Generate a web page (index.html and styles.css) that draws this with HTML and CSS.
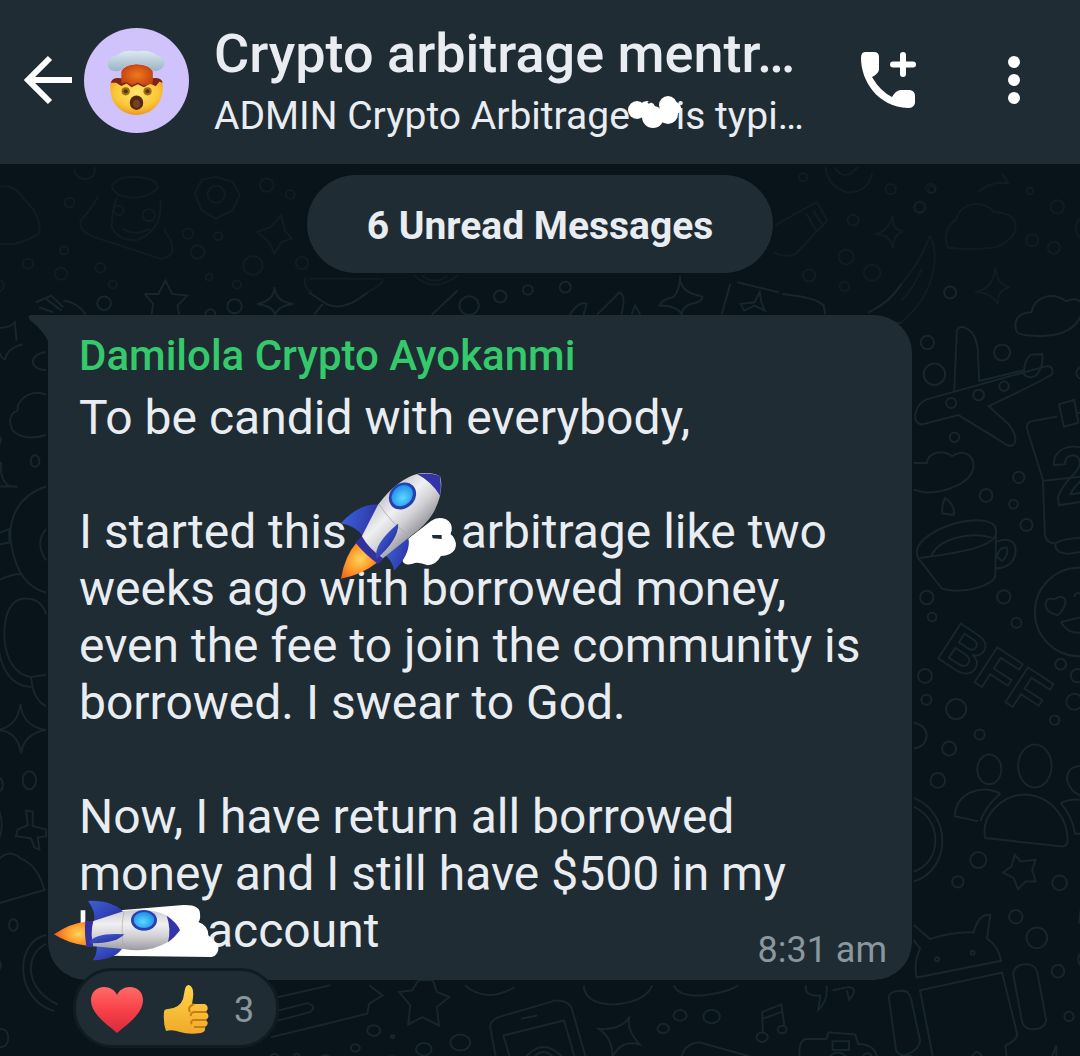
FILE: index.html
```html
<!DOCTYPE html>
<html lang="en">
<head>
<meta charset="utf-8">
<meta name="viewport" content="width=device-width, initial-scale=1">
<title>Crypto arbitrage group chat</title>
<link rel="stylesheet" href="styles.css">
</head>
<body>
<svg class="defs" aria-hidden="true">
  <defs>
    <linearGradient id="hull" x1="0" y1="0" x2="0" y2="1">
      <stop offset="0" stop-color="#c9cad2"/><stop offset=".35" stop-color="#f0f0f2"/><stop offset=".65" stop-color="#d2d1d3"/><stop offset="1" stop-color="#9c9ba3"/>
    </linearGradient>
    <linearGradient id="fin" x1="0" y1="0" x2="1" y2="1">
      <stop offset="0" stop-color="#3a62d8"/><stop offset="1" stop-color="#2c2799"/>
    </linearGradient>
    <radialGradient id="flame" cx=".75" cy=".5" r=".75">
      <stop offset="0" stop-color="#ffd65a"/><stop offset=".5" stop-color="#ff9a2c"/><stop offset="1" stop-color="#ef5a1a"/>
    </radialGradient>
    <radialGradient id="glass" cx=".45" cy=".6" r=".6">
      <stop offset="0" stop-color="#5fd8ff"/><stop offset="1" stop-color="#1d8fea"/>
    </radialGradient>
    <radialGradient id="skin" cx=".5" cy=".35" r=".7">
      <stop offset="0" stop-color="#ffe66b"/><stop offset=".6" stop-color="#fbc637"/><stop offset="1" stop-color="#e98e1c"/>
    </radialGradient>
    <linearGradient id="smoke" x1="0" y1="0" x2="0" y2="1">
      <stop offset="0" stop-color="#dde9f0"/><stop offset="1" stop-color="#98b3c6"/>
    </linearGradient>
    <radialGradient id="blast" cx=".5" cy=".5" r=".6">
      <stop offset="0" stop-color="#ee7a1c"/><stop offset="1" stop-color="#c13c10"/>
    </radialGradient>
    <linearGradient id="heart" x1="0" y1="0" x2="0" y2="1">
      <stop offset="0" stop-color="#ff6a66"/><stop offset=".5" stop-color="#f8414a"/><stop offset="1" stop-color="#d82a3c"/>
    </linearGradient>
    <linearGradient id="thumb" x1="0" y1="0" x2="0" y2="1">
      <stop offset="0" stop-color="#ffd54a"/><stop offset="1" stop-color="#f0a92a"/>
    </linearGradient>
    <g id="rocket">
      <path fill="url(#fin)" d="M144 62Q215 58 250 94L245 128H162Q168 92 144 62Z"/>
      <path fill="url(#fin)" d="M158 240Q172 222 170 198L252 194Q235 238 158 240Z"/>
      <path fill="url(#flame)" d="M42 162Q90 128 140 124V196Q85 190 42 162Z"/>
      <path fill="#33309f" d="M136 122H164V200H140Q132 160 136 122Z"/>
      <path fill="url(#hull)" d="M160 122L250 93Q335 80 385 108Q412 128 420 150Q400 185 340 204Q300 214 250 206L160 198Q150 160 160 122Z"/>
      <path fill="none" stroke="#aaa9b0" stroke-width="2" d="M252 94Q240 150 252 206"/>
      <path fill="#3434a6" d="M380 106Q412 128 420 150Q405 170 384 186Q394 145 380 106Z"/>
      <ellipse cx="312" cy="120" rx="39" ry="31" fill="#2a3fae"/>
      <ellipse cx="312" cy="119" rx="31" ry="24" fill="url(#glass)"/>
      <path fill="url(#fin)" d="M146 188Q165 156 253 162Q225 192 146 188Z"/>
    </g>
  </defs>
</svg>

<header class="topbar">
  <button class="icon-button" aria-label="Back">
    <svg width="48" height="50" viewBox="0 0 48 50"><path d="M26 3L4 25L26 47M4 25H48" fill="none" stroke="#fff" stroke-width="6"/></svg>
  </button>
  <svg class="avatar" viewBox="0 0 360 360" role="img" aria-label="Group photo">
    <circle cx="180" cy="180" r="180" fill="#d0c2fa"/>
    <path fill="url(#skin)" d="M90 190Q96 176 110 188L128 198L146 188L163 202L184 192L206 202L226 188L246 200L258 182Q272 178 270 205C270 262 228 298 180 298S90 262 90 205Z"/>
    <path fill="#7b2417" d="M92 188Q96 168 125 172H235Q266 168 270 188L258 184L246 200L226 190L206 203L184 193L163 203L146 190L128 199L110 188Z"/>
    <path fill="url(#blast)" d="M128 190V150Q136 126 180 124Q228 126 236 150V190L206 198L184 188L163 197L146 186Z"/>
    <path fill="url(#smoke)" d="M90 142C72 120 90 96 112 94C132 76 162 76 180 80C206 74 240 80 250 94C276 98 284 124 266 140Q250 152 232 144C222 124 204 128 182 122C160 128 142 124 132 142Q110 154 90 142Z"/>
    <circle cx="143" cy="217" r="14" fill="#9b6b16"/><circle cx="143" cy="217" r="7" fill="#4b3714"/>
    <circle cx="218" cy="217" r="14" fill="#9b6b16"/><circle cx="218" cy="217" r="7" fill="#4b3714"/>
    <ellipse cx="180" cy="256" rx="23" ry="25" fill="#53290f"/><ellipse cx="180" cy="260" rx="12" ry="14" fill="#7c3e20"/>
  </svg>
  <div class="titles">
    <h1 class="title">Crypto arbitrage mentr…</h1>
    <p class="subtitle">ADMIN Crypto Arbitrage<span class="smudge smudge-small"><svg viewBox="0 0 55 34" width="55" height="34" aria-hidden="true"><g fill="#fff"><circle cx="10" cy="15" r="9"/><circle cx="20" cy="15" r="9"/><circle cx="26" cy="22" r="11"/><circle cx="41" cy="10" r="9"/><circle cx="41" cy="19" r="10"/><circle cx="48" cy="13" r="6"/></g><path d="M21 8Q26 4 31 9" fill="none" stroke="#1f2c33" stroke-width="2"/></svg></span>is typi…</p>
  </div>
  <button class="icon-button call" aria-label="Add call">
    <svg width="56" height="58" viewBox="0 0 56 58"><path fill="#fff" d="M5 1H14Q19 1 19 6V19Q18 23 12 26Q20 40 32 46Q36 39 41 39H50Q55 40 55 45V52Q54 57 48 57C18 56 1 30 1 7Q1 1 5 1Z"/><path d="M43 4V23M33 13.500H53" stroke="#fff" stroke-width="6" stroke-linecap="round"/></svg>
  </button>
  <button class="icon-button" aria-label="More options">
    <svg width="14" height="50" viewBox="0 0 14 50" fill="#fff"><circle cx="7" cy="7" r="6"/><circle cx="7" cy="25" r="6"/><circle cx="7" cy="43" r="6"/></svg>
  </button>
</header>

<main class="chat">
  <svg class="wallpaper" viewBox="0 164 1080 892" preserveAspectRatio="xMidYMin slice" aria-hidden="true">
    <g class="faint" transform="translate(0 160) scale(.3444 .3333)">
      <path d="M0 80Q50 70 75 115Q130 170 120 220Q60 260 0 250M330 80Q340 50 400 50Q465 55 462 85Q430 115 390 112Q340 110 330 80ZM345 112Q330 150 330 200Q345 240 400 240Q480 210 470 120M290 110Q270 150 240 180Q235 215 280 230L470 295Q520 290 500 240L480 205M360 205Q400 230 440 205M570 100L590 60L630 50L680 65L700 105L680 150L630 175L590 150ZM750 215L790 200L820 165L830 210L850 235L820 245L800 280L785 245ZM220 30Q235 65 265 55Q285 45 280 20"/>
      <circle cx="632" cy="103" r="25"/><circle cx="350" cy="150" r="14"/><circle cx="437" cy="165" r="18"/><circle cx="208" cy="127" r="14"/><circle cx="778" cy="75" r="20"/><circle cx="846" cy="103" r="13"/><circle cx="550" cy="220" r="15"/><circle cx="638" cy="228" r="12"/><circle cx="578" cy="275" r="20"/><circle cx="738" cy="315" r="28"/><circle cx="88" cy="310" r="15"/><circle cx="192" cy="270" r="12"/><circle cx="183" cy="340" r="18"/><circle cx="297" cy="322" r="14"/><circle cx="333" cy="372" r="12"/><circle cx="612" cy="350" r="10"/><circle cx="692" cy="372" r="12"/><circle cx="0" cy="375" r="18"/><circle cx="880" cy="308" r="18"/>
      <path d="M890 350Q880 380 910 395M1115 355Q1110 375 1070 395M900 355H1110M1205 345Q1260 400 1330 345M1225 345Q1265 375 1300 345"/>
    </g>
    <g transform="translate(0 160) scale(.3444 .3333)">
      <path d="M110 425L155 405L190 440M120 440L160 455M140 415L185 450M190 420Q230 425 255 462M425 400L465 400L485 360L505 400L548 405L520 435L525 462M425 400L450 430L445 462M800 380Q805 425 855 430Q810 435 803 462Q795 435 750 430Q800 420 800 380ZM900 395L950 430Q1000 455 1070 395M940 430L915 462M1330 390L1255 462M0 500Q30 505 50 485L55 540"/>
      <circle cx="308" cy="428" r="20"/><circle cx="685" cy="437" r="21"/><circle cx="615" cy="460" r="14"/><circle cx="1363" cy="435" r="28"/><circle cx="1453" cy="408" r="18"/><circle cx="1533" cy="388" r="14"/>
    </g>
    <g class="faint" transform="translate(540 160) scale(.3444 .3333)">
      <path d="M825 20Q830 80 890 97Q950 95 960 40M850 20Q880 70 920 20M680 195L800 125L830 180L740 280Q710 295 675 275M1020 165Q1015 210 1050 212Q1020 225 1020 262Q1010 220 970 222Q1010 210 1020 165ZM790 150L820 200M770 160L800 215"/>
      <circle cx="1014" cy="87" r="15"/><circle cx="905" cy="180" r="16"/><circle cx="1100" cy="140" r="16"/><circle cx="885" cy="290" r="22"/><circle cx="960" cy="337" r="24"/><circle cx="778" cy="345" r="18"/><circle cx="880" cy="378" r="14"/><circle cx="760" cy="52" r="12"/><circle cx="1130" cy="85" r="14"/>
    </g>
    <g transform="translate(540 160) scale(.3444 .3333)">
      <path d="M85 465Q110 420 135 430L125 465M165 462L230 395Q250 405 235 462M265 462L275 435L290 462M405 345Q400 395 470 408Q470 425 435 430Q410 440 410 462Q395 435 345 435Q355 415 385 410Q405 390 405 345ZM525 462L550 370M570 365L690 395M700 400Q800 410 820 435L825 462M580 430L620 425L635 395L640 425L650 450L620 435L590 450Z"/>
      <circle cx="73" cy="380" r="16"/>
    </g>
    <g class="faint" transform="translate(900 160) scale(.3333)">
      <path d="M140 262C120 230 140 190 162 180C180 120 250 120 275 155C310 155 345 170 340 200C340 230 300 260 270 262Q200 270 140 262ZM230 95Q270 60 318 70L300 40M280 320Q285 375 325 380Q285 385 288 432Q270 395 220 395Q275 385 280 320ZM540 170Q500 200 540 240"/>
      <circle cx="52" cy="142" r="16"/><circle cx="465" cy="140" r="20"/><circle cx="390" cy="240" r="18"/><circle cx="455" cy="262" r="18"/><circle cx="90" cy="88" r="10"/><circle cx="383" cy="92" r="10"/>
      <path d="M85 225C60 290 40 320 0 370M85 225C115 290 100 400 0 485M60 325C40 370 20 400 0 420"/>
    </g>
    <g transform="translate(900 160) scale(.3333)">
      <path d="M0 370Q-40 430 -100 455M0 485L-20 490"/>
      <path d="M345 515C330 480 350 455 388 455C395 410 450 390 492 422C520 408 545 420 540 450C530 500 480 530 400 525Q355 525 345 515Z"/>
      <path d="M157 690L165 510Q175 485 210 515Q228 540 228 580L232 660L365 628M425 618Q455 610 450 640Q380 680 260 735L320 790Q350 830 335 850Q320 860 305 845L170 762L60 790Q35 785 42 755Q50 725 75 715ZM365 640Q365 600 385 582L420 580Q425 620 400 645Q380 655 365 640Z"/>
      <path d="M36 905H75C80 870 125 865 150 885C190 860 215 885 215 915C210 965 130 995 70 993L36 985M130 1010Q160 1030 156 1060L122 1056Q118 1030 130 1010Z"/>
      <path d="M50 1190C30 1150 80 1110 160 1085C240 1065 285 1080 282 1110C285 1160 150 1175 50 1190L120 1280C180 1300 280 1270 280 1240L282 1100M285 1140C320 1125 345 1140 340 1175C335 1205 310 1220 280 1220M88 1185C110 1130 200 1110 270 1128M285 1185Q290 1155 315 1158Q320 1180 300 1198Z"/>
      <path d="M465 766L390 780Q370 785 375 805L422 955L428 1120Q435 1145 455 1145M540 1128Q480 1130 460 1145Q455 1175 500 1176L540 1170M425 958L540 945M525 755H540M470 730L515 716L528 785L485 797Z"/>
      <circle cx="77" cy="545" r="20"/><circle cx="98" cy="640" r="32"/><circle cx="300" cy="575" r="24"/><circle cx="230" cy="702" r="16"/><circle cx="306" cy="676" r="14"/><circle cx="148" cy="726" r="15"/><circle cx="158" cy="828" r="14"/><circle cx="145" cy="396" r="18"/><circle cx="350" cy="948" r="17"/><circle cx="252" cy="1002" r="19"/><circle cx="334" cy="1028" r="13"/><circle cx="373" cy="1090" r="18"/><circle cx="75" cy="1307" r="20"/><circle cx="305" cy="1305" r="20"/><circle cx="540" cy="636" r="18"/>
      <circle cx="530" cy="1350" r="132"/>
      <path d="M430 1330Q430 1305 455 1312Q485 1295 490 1320Q485 1345 465 1360Q430 1350 430 1330ZM515 1305Q520 1285 540 1300M475 1380Q500 1420 540 1410M475 1380L540 1365"/>
    </g>
    <text class="doodle-text" transform="translate(933 654) rotate(33)" font-size="60">BFF</text>
    <text class="doodle-text" transform="translate(1054 504) rotate(-8)" font-size="80">2</text>
    <g transform="translate(900 600) scale(.3333)">
      <circle cx="91" cy="45" r="13"/><circle cx="343" cy="62" r="15"/><circle cx="70" cy="221" r="21"/><circle cx="74" cy="292" r="15"/><circle cx="163" cy="320" r="30"/><circle cx="142" cy="438" r="21"/><circle cx="108" cy="533" r="22"/><circle cx="233" cy="396" r="15"/><circle cx="457" cy="353" r="14"/><circle cx="475" cy="186" r="16"/><circle cx="525" cy="220" r="20"/><circle cx="516" cy="298" r="24"/><circle cx="229" cy="771" r="24"/><circle cx="168" cy="836" r="17"/><circle cx="472" cy="839" r="22"/><circle cx="341" cy="940" r="20"/><circle cx="404" cy="1003" r="31"/><circle cx="467" cy="1103" r="19"/><circle cx="500" cy="1238" r="14"/><circle cx="106" cy="1067" r="6"/><circle cx="212" cy="1048" r="6"/>
      <ellipse cx="262" cy="500" rx="36" ry="44"/><ellipse cx="398" cy="490" rx="50" ry="64"/>
      <path d="M250 705C235 640 300 575 370 575C450 580 500 650 495 720Q490 732 475 730ZM295 572C240 545 165 565 158 640L228 655M295 572Q250 610 235 655M540 490Q490 490 495 535Q505 570 540 580M475 600Q510 585 540 592M475 600Q510 640 518 692H540M338 755L355 775L400 770L390 800L400 835L370 835L348 858L335 825L303 808L328 790Z"/>
      <path d="M36 585C150 630 150 800 36 835M36 612C125 650 120 780 36 805M36 360Q75 370 75 400Q70 435 36 437M36 965L85 1007Q150 985 215 987Q230 930 265 935L255 1005Q290 1030 297 1072L45 1122Q35 1080 55 1035L36 1010M95 1368L55 1160L300 1107L345 1290Q345 1310 310 1325L315 1368M333 1110Q340 1080 375 1082Q400 1085 405 1105L432 1250Q425 1280 385 1276Q365 1272 360 1255ZM0 1160Q20 1160 28 1185L55 1310Q50 1345 0 1355M205 1368Q225 1320 245 1368M445 1368L462 1325V1368M540 880L530 960M540 1040Q515 1070 540 1090"/>
    </g>
    <g transform="translate(270 960) scale(.4082 .3333)">
      <path d="M5 105L150 65M8 145L95 118Q120 130 100 145L8 175M5 220L240 150L245 120L278 95L245 65M318 85L350 80L365 50L400 50L410 85L440 100L410 130L415 185L375 160L340 182L345 125ZM478 65Q530 120 600 70M768 65Q770 120 840 122Q920 115 935 65M988 65Q1000 100 1060 95Q1120 85 1145 65"/>
      <path d="M555 288L540 190Q540 170 560 160L700 110Q735 110 740 140L775 288M590 288L572 215L720 170L748 288M615 165L655 155M620 288Q670 210 722 288M640 288Q670 240 700 288M880 158Q870 195 905 242Q860 225 838 280Q840 225 805 195Q860 200 880 158ZM1005 288Q1010 240 1050 235L1180 280M1205 205L1203 145L1250 122L1258 190M1205 165L1250 145M1310 65Q1305 100 1345 95L1340 138Q1365 110 1360 65M1375 80L1415 70Q1440 75 1415 108L1410 80M1295 288Q1290 230 1310 225L1360 225L1365 205L1430 212L1438 240Q1480 240 1485 288M1375 232H1415V258H1375ZM1560 85Q1515 75 1512 100L1530 260Q1540 280 1568 275"/>
      <circle cx="256" cy="200" r="16"/><circle cx="302" cy="218" r="4"/><circle cx="211" cy="252" r="11"/><circle cx="378" cy="256" r="19"/><circle cx="467" cy="236" r="24"/><circle cx="962" cy="194" r="14"/><circle cx="1003" cy="155" r="16"/><circle cx="1080" cy="158" r="20"/><circle cx="1203" cy="220" r="14"/><circle cx="1252" cy="197" r="11"/><circle cx="1388" cy="288" r="22"/><circle cx="1460" cy="278" r="10"/><circle cx="300" cy="295" r="18"/><circle cx="68" cy="275" r="6"/><circle cx="14" cy="280" r="10"/><circle cx="138" cy="290" r="16"/>
    </g>
    <g transform="translate(0 340) scale(.3333 .4464)">
      <path d="M0 15Q10 40 22 42Q30 15 75 8M145 25Q105 30 105 48Q110 65 145 65M145 120C110 110 75 120 60 145L60 155C30 165 35 185 45 200Q80 225 145 210M145 325C60 345 30 400 40 450C55 520 90 550 145 562M145 420Q110 450 145 490M0 430L35 420V450L0 455M0 535Q40 520 70 520M145 610Q130 575 85 575C30 575 20 620 20 660C25 720 60 745 100 750L145 745M0 650C0 730 40 770 100 772M100 750Q105 800 145 815M68 810Q75 860 145 868Q80 875 70 920Q60 870 0 868Q60 860 68 810ZM0 325H60M10 270Q5 310 35 325M85 1048L105 1050V1082L145 1090V1105L120 1108L125 1135L110 1130L100 1110L55 1105L60 1090L90 1080ZM0 1160Q30 1130 70 1155Q120 1170 140 1225L0 1255M145 1325C50 1340 50 1470 170 1495M145 1345C75 1370 85 1450 180 1480M0 1040Q25 1080 0 1120"/>
      <circle cx="112" cy="268" r="13"/><circle cx="95" cy="980" r="20"/><circle cx="0" cy="990" r="16"/><circle cx="47" cy="1303" r="13"/><circle cx="0" cy="1393" r="10"/><circle cx="12" cy="1555" r="20"/><circle cx="0" cy="222" r="10"/>
    </g>
  </svg>

  <p class="unread">6 Unread Messages</p>

  <article class="bubble">
    <svg class="tail" width="22" height="30" viewBox="0 0 22 30" aria-hidden="true"><path d="M3 0H22V30Q16 16 3 6Q-2 1 3 0Z"/></svg>
    <h2 class="sender">Damilola Crypto Ayokanmi</h2>
    <div class="message">
      <p>To be candid with everybody,</p>
      <p>I started this<span class="smudge smudge-medium"><svg width="150" height="130" viewBox="0 0 450 390" aria-hidden="true"><path fill="#fff" d="M240 250L330 180Q350 165 375 175Q395 185 392 210Q385 220 395 225Q410 245 402 265Q390 285 360 285Q345 312 320 313Q290 300 275 308Q250 315 245 300Z"/><path fill="#1f2c33" d="M333 222H362V234L335 232Z"/><use href="#rocket" transform="translate(60 353) rotate(-44) scale(1.13 1.2) translate(-42 -162)"/></svg></span>arbitrage like two weeks ago with borrowed money, even the fee to join the community is borrowed. I swear to God.</p>
      <p>Now, I have return all borrowed money and I still have $500 in my <span class="smudge smudge-large"><svg width="170" height="67" viewBox="30 50 510 201" aria-hidden="true"><path fill="#fff" d="M122 90H136V130H122ZM240 90L430 74Q480 72 480 100Q482 118 475 125Q505 135 505 165L535 195Q538 225 515 230L210 226L250 195Z"/><use href="#rocket"/></svg></span>account</p>
    </div>
    <time class="time" datetime="08:31">8:31 am</time>
  </article>

  <button class="reactions" aria-label="3 reactions">
    <svg width="52" height="46" viewBox="0 0 52 46" aria-hidden="true"><path fill="url(#heart)" d="M26 46C14 36 0 26 0 13C0 5 6 0 13 0C19 0 24 3 26 8C28 3 33 0 39 0C46 0 52 5 52 13C52 26 38 36 26 46Z"/></svg>
    <svg width="46" height="50" viewBox="0 0 46 50" aria-hidden="true"><path fill="url(#thumb)" d="M1 27Q1 24 5 24Q17 23 20 14L22 4Q23 0 26 0C31 2 31 9 29 19L42 19Q47 22 43 27Q48 31 43 35Q47 39 42 42Q43 47 38 48Q26 50 17 47Q9 44 3 46Q0 38 1 27Z"/><path fill="none" stroke="#c87d14" stroke-width="2" d="M43 27H31Q27 28 28 31M43 35H30Q27 37 29 39M42 42H31M31 19Q24 22 27 27"/></svg>
    <span>3</span>
  </button>
</main>
</body>
</html>
```

FILE: styles.css
```css
* {
  box-sizing: border-box;
}

body {
  display: flex;
  flex-direction: column;
  min-height: 100vh;
  margin: 0;
  background: #08131a;
  color: #e9edf2;
  font-family: Roboto, "Liberation Sans", sans-serif;
}

h1,
h2,
p {
  margin: 0;
}

svg {
  display: block;
}

button {
  border: 0;
  background: none;
  color: inherit;
  font: inherit;
}

.defs {
  position: absolute;
  width: 0;
  height: 0;
}

.topbar {
  display: flex;
  align-items: center;
  padding: 20px 59px 24px 24px;
  background: #1f2c33;
}

.icon-button {
  flex: none;
  padding: 0;
}

.avatar {
  flex: none;
  width: 105px;
  height: 105px;
  margin: 0 25px 0 12px;
}

.titles {
  flex: 1;
  min-width: 0;
  padding-top: 4px;
}

.title {
  font-size: 54px;
  font-weight: 500;
  line-height: 60px;
  white-space: nowrap;
}

.subtitle {
  margin-top: 8px;
  font-size: 39px;
  line-height: 48px;
  white-space: nowrap;
}

.call {
  margin-right: 91px;
}

.chat {
  position: relative;
  display: flex;
  flex: 1;
  flex-direction: column;
  align-items: flex-start;
  padding: 11px 0 12px;
  overflow: hidden;
}

.wallpaper {
  position: absolute;
  inset: 0;
  width: 100%;
  height: 100%;
  fill: none;
  stroke: #17262c;
  stroke-width: 2px;
}

.wallpaper * {
  vector-effect: non-scaling-stroke;
}

.faint {
  opacity: 0.5;
}

.doodle-text {
  font-family: "Liberation Sans", sans-serif;
  font-weight: 700;
}

.unread {
  position: relative;
  align-self: center;
  padding: 27px 60px 23px;
  border-radius: 49px;
  background: #1f2c33;
  font-size: 39px;
  font-weight: 700;
  line-height: 48px;
}

.bubble {
  position: relative;
  display: flex;
  flex-direction: column;
  width: 80%;
  margin: 42px 0 0 48px;
  padding: 17px 25px 9px 31px;
  border-radius: 0 38px 38px 38px;
  background: #1f2c33;
}

.tail {
  position: absolute;
  top: 0;
  left: -20px;
  fill: #1f2c33;
}

.sender {
  color: #35c96b;
  font-size: 42px;
  font-weight: 500;
  line-height: 48px;
}

.message {
  display: flex;
  flex-direction: column;
  gap: 57px;
  margin-top: 9px;
  font-size: 48px;
  line-height: 57px;
}

.time {
  align-self: flex-end;
  margin-top: -30px;
  color: #8a979f;
  font-size: 36px;
  line-height: 42px;
}

.smudge {
  position: relative;
  display: inline-block;
  height: 1em;
  vertical-align: top;
}

.smudge svg {
  position: absolute;
}

.smudge-small {
  width: 46px;
}

.smudge-small svg {
  top: 3px;
  left: -3px;
}

.smudge-medium {
  width: 114px;
}

.smudge-medium svg {
  top: -42px;
  left: -26px;
}

.smudge-large {
  width: 128px;
}

.smudge-large svg {
  top: -5px;
  left: -29px;
}

.reactions {
  position: relative;
  display: flex;
  align-items: center;
  gap: 20px;
  margin: -12px 0 0 73px;
  padding: 13px 22px 9px 15px;
  border: 3px solid #111c22;
  border-radius: 39px;
  background: #1f2c33;
  color: #8a979f;
  font-size: 36px;
  line-height: 52px;
}

.reactions span {
  margin-left: 5px;
}
```
